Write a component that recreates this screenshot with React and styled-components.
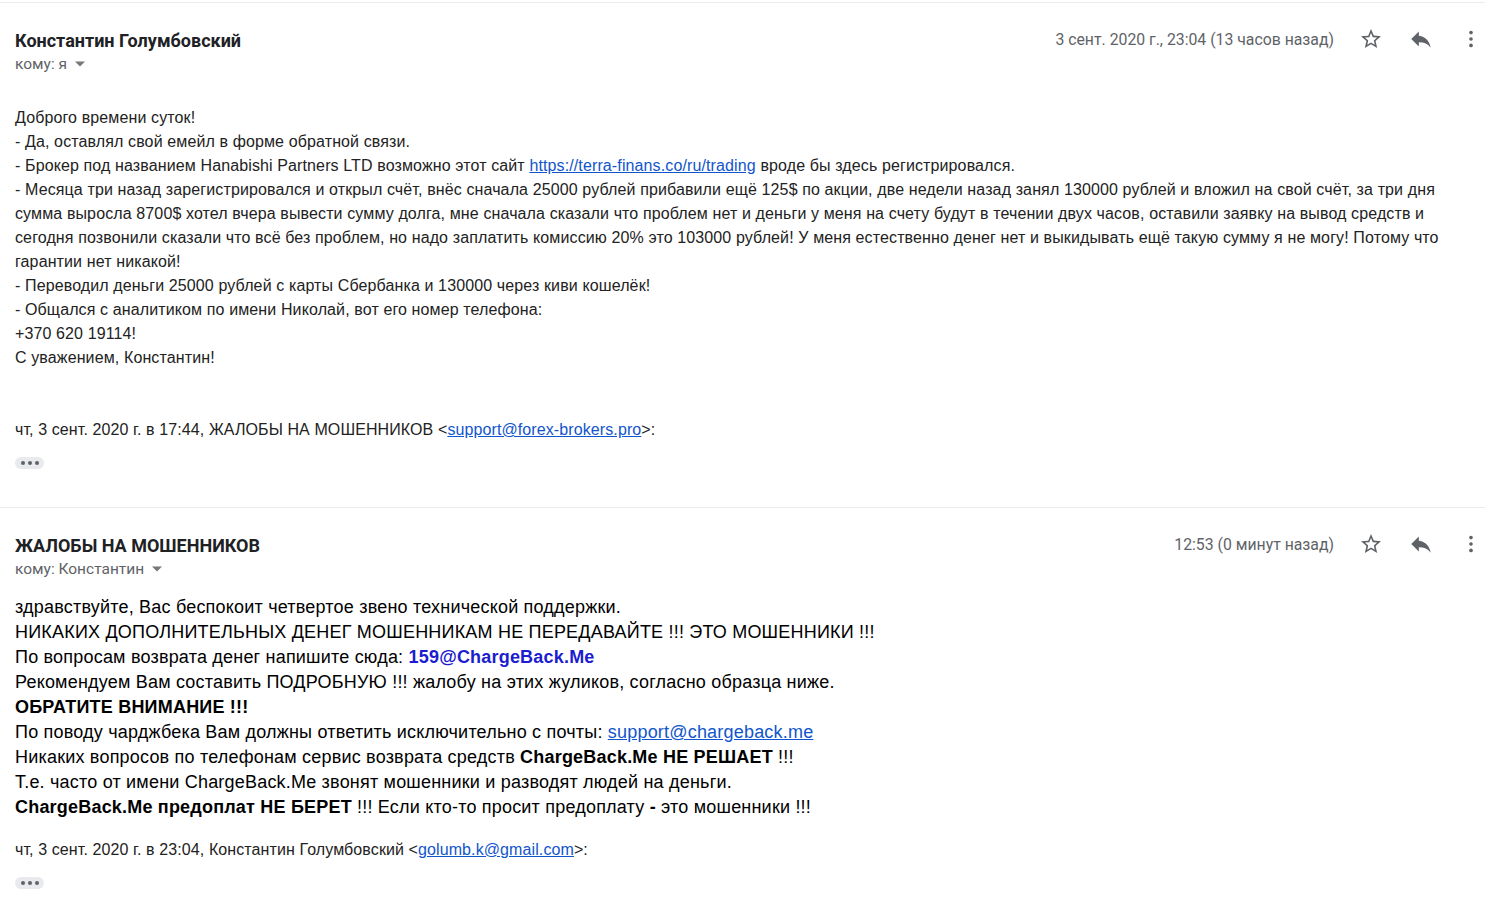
import React from 'react';
import styled, { createGlobalStyle } from 'styled-components';

const GlobalStyle = createGlobalStyle`
  html, body {
    margin: 0;
    padding: 0;
    background: #fff;
  }
  body {
    font-family: Roboto, "Liberation Sans", Arial, sans-serif;
    color: #222;
  }
`;

const StarIcon = () => (
  <svg width="24" height="24" viewBox="0 0 24 24" fill="#5f6368">
    <path d="M22 9.24l-7.19-.62L12 2 9.19 8.63 2 9.24l5.46 4.73L5.82 21 12 17.27 18.18 21l-1.63-7.03L22 9.24zM12 15.4l-3.76 2.27 1-4.28-3.32-2.88 4.38-.38L12 6.1l1.71 4.04 4.38.38-3.32 2.88 1 4.28L12 15.4z" />
  </svg>
);

const ReplyIcon = () => (
  <svg width="26" height="26" viewBox="0 0 24 24" fill="#5f6368">
    <path d="M10 9V5l-7 7 7 7v-4.1c5 0 8.5 1.6 11 5.1-1-5-4-10-11-11z" />
  </svg>
);

const MoreIcon = () => (
  <svg width="22" height="22" viewBox="0 0 24 24" fill="#5f6368">
    <circle cx="12" cy="5" r="2" />
    <circle cx="12" cy="12" r="2" />
    <circle cx="12" cy="19" r="2" />
  </svg>
);

const Caret = () => (
  <svg width="10" height="6" viewBox="0 0 10 5" fill="#777">
    <path d="M0 0l5 5 5-5z" />
  </svg>
);

const Message = ({ sender, to, date, children, quote }) => (
  <Card>
    <Header>
      <Who>
        <Sender>{sender}</Sender>
        <To>кому: {to} <Caret /></To>
      </Who>
      <Meta>
        <DateText>{date}</DateText>
        <IconBtn><StarIcon /></IconBtn>
        <IconBtn><ReplyIcon /></IconBtn>
        <IconBtn><MoreIcon /></IconBtn>
      </Meta>
    </Header>
    {children}
    {quote}
  </Card>
);

const ShowTrimmed = () => (
  <Dots>
    <Dot />
    <Dot />
    <Dot />
  </Dots>
);

const App = () => {
  return (
    <Page>
      <GlobalStyle />
      <Rule />
      <Message
        sender="Константин Голумбовский"
        to="я"
        date="3 сент. 2020 г., 23:04 (13 часов назад)"
        quote={
          <Quote $gap={48} $after={38}>
            <QuoteLine $spacing={0.1}>
              чт, 3 сент. 2020 г. в 17:44, ЖАЛОБЫ НА МОШЕННИКОВ &lt;<Link href="#">support@forex-brokers.pro</Link>&gt;:
            </QuoteLine>
            <ShowTrimmed />
          </Quote>
        }
      >
        <BodyOne>
          Доброго времени суток!<br />
          - Да, оставлял свой емейл в форме обратной связи.<br />
          - Брокер под названием Hanabishi Partners LTD возможно этот сайт <Link href="#">https://terra-finans.co/ru/trading</Link> вроде бы здесь регистрировался.<br />
          - Месяца три назад зарегистрировался и открыл счёт, внёс сначала 25000 рублей прибавили ещё 125$ по акции, две недели назад занял 130000 рублей и вложил на свой счёт, за три дня<br />
          сумма выросла 8700$ хотел вчера вывести сумму долга, мне сначала сказали что проблем нет и деньги у меня на счету будут в течении двух часов, оставили заявку на вывод средств и<br />
          сегодня позвонили сказали что всё без проблем, но надо заплатить комиссию 20% это 103000 рублей! У меня естественно денег нет и выкидывать ещё такую сумму я не могу! Потому что<br />
          гарантии нет никакой!<br />
          - Переводил деньги 25000 рублей с карты Сбербанка и 130000 через киви кошелёк!<br />
          - Общался с аналитиком по имени Николай, вот его номер телефона:<br />
          +370 620 19114!<br />
          С уважением, Константин!
        </BodyOne>
      </Message>
      <Rule />
      <Message
        sender="ЖАЛОБЫ НА МОШЕННИКОВ"
        to="Константин"
        date="12:53 (0 минут назад)"
        quote={
          <Quote $gap={18} $after={8}>
            <QuoteLine $spacing={0.1}>
              чт, 3 сент. 2020 г. в 23:04, Константин Голумбовский &lt;<Link href="#">golumb.k@gmail.com</Link>&gt;:
            </QuoteLine>
            <ShowTrimmed />
          </Quote>
        }
      >
        <BodyTwo>
          здравствуйте, Вас беспокоит четвертое звено технической поддержки.<br />
          НИКАКИХ ДОПОЛНИТЕЛЬНЫХ ДЕНЕГ МОШЕННИКАМ НЕ ПЕРЕДАВАЙТЕ !!! ЭТО МОШЕННИКИ !!!<br />
          По вопросам возврата денег напишите сюда: <Accent>159@ChargeBack.Me</Accent><br />
          Рекомендуем Вам составить ПОДРОБНУЮ !!! жалобу на этих жуликов, согласно образца ниже.<br />
          <b>ОБРАТИТЕ ВНИМАНИЕ !!!</b><br />
          По поводу чарджбека Вам должны ответить исключительно с почты: <Link href="#">support@chargeback.me</Link><br />
          Никаких вопросов по телефонам сервис возврата средств <b>ChargeBack.Me НЕ РЕШАЕТ</b> !!!<br />
          Т.е. часто от имени ChargeBack.Me звонят мошенники и разводят людей на деньги.<br />
          <b>ChargeBack.Me предоплат НЕ БЕРЕТ</b> !!! Если кто-то просит предоплату <b>-</b> это мошенники !!!
        </BodyTwo>
      </Message>
    </Page>
  );
};

const Page = styled.div`
  width: 1503px;
  padding-top: 2px;
`;

const Rule = styled.div`
  width: 1485px;
  height: 1px;
  background: #ececec;
`;

const Card = styled.section`
  padding: 0 7px 0 15px;
`;

const Header = styled.div`
  display: flex;
  justify-content: space-between;
  align-items: flex-start;
  padding-top: 27px;
`;

const Who = styled.div`
  display: flex;
  flex-direction: column;
`;

const Sender = styled.div`
  font-size: 18px;
  font-weight: 700;
  color: #202124;
  line-height: 22px;
`;

const To = styled.div`
  font-size: 15.5px;
  color: #5f6368;
  line-height: 20px;
  margin-top: 2px;
  display: flex;
  align-items: center;
  gap: 8px;
`;

const Meta = styled.div`
  display: flex;
  align-items: center;
  margin-top: -5px;
`;

const DateText = styled.span`
  font-size: 15.8px;
  color: #5f6368;
  margin-right: 12px;
`;

const IconBtn = styled.span`
  width: 50px;
  height: 28px;
  display: flex;
  align-items: center;
  justify-content: center;
`;

const BodyOne = styled.div`
  font-family: "Liberation Sans", Arial, sans-serif;
  font-size: 16px;
  letter-spacing: 0.12px;
  line-height: 24px;
  color: #222;
  margin-top: 32px;
  white-space: nowrap;
`;

const BodyTwo = styled.div`
  font-family: "Liberation Sans", Arial, sans-serif;
  font-size: 18px;
  line-height: 25px;
  color: #000;
  margin-top: 16px;
  letter-spacing: 0.2px;
`;

const Accent = styled.b`
  color: #1c1cd0;
`;

const Link = styled.a`
  color: #1155cc;
  text-decoration: underline;
`;

const Quote = styled.div`
  margin-top: ${p => p.$gap}px;
  padding-bottom: ${p => p.$after}px;
`;

const QuoteLine = styled.div`
  font-family: "Liberation Sans", Arial, sans-serif;
  font-size: 16px;
  letter-spacing: ${p => p.$spacing || 0}px;
  color: #222;
  line-height: 24px;
`;

const Dots = styled.div`
  display: flex;
  align-items: center;
  justify-content: center;
  gap: 3px;
  margin-top: 15px;
  width: 29px;
  height: 12px;
  border-radius: 6px;
  background: #e8eaed;
`;

const Dot = styled.span`
  width: 4px;
  height: 4px;
  border-radius: 50%;
  background: #5f6368;
`;

export default App;
